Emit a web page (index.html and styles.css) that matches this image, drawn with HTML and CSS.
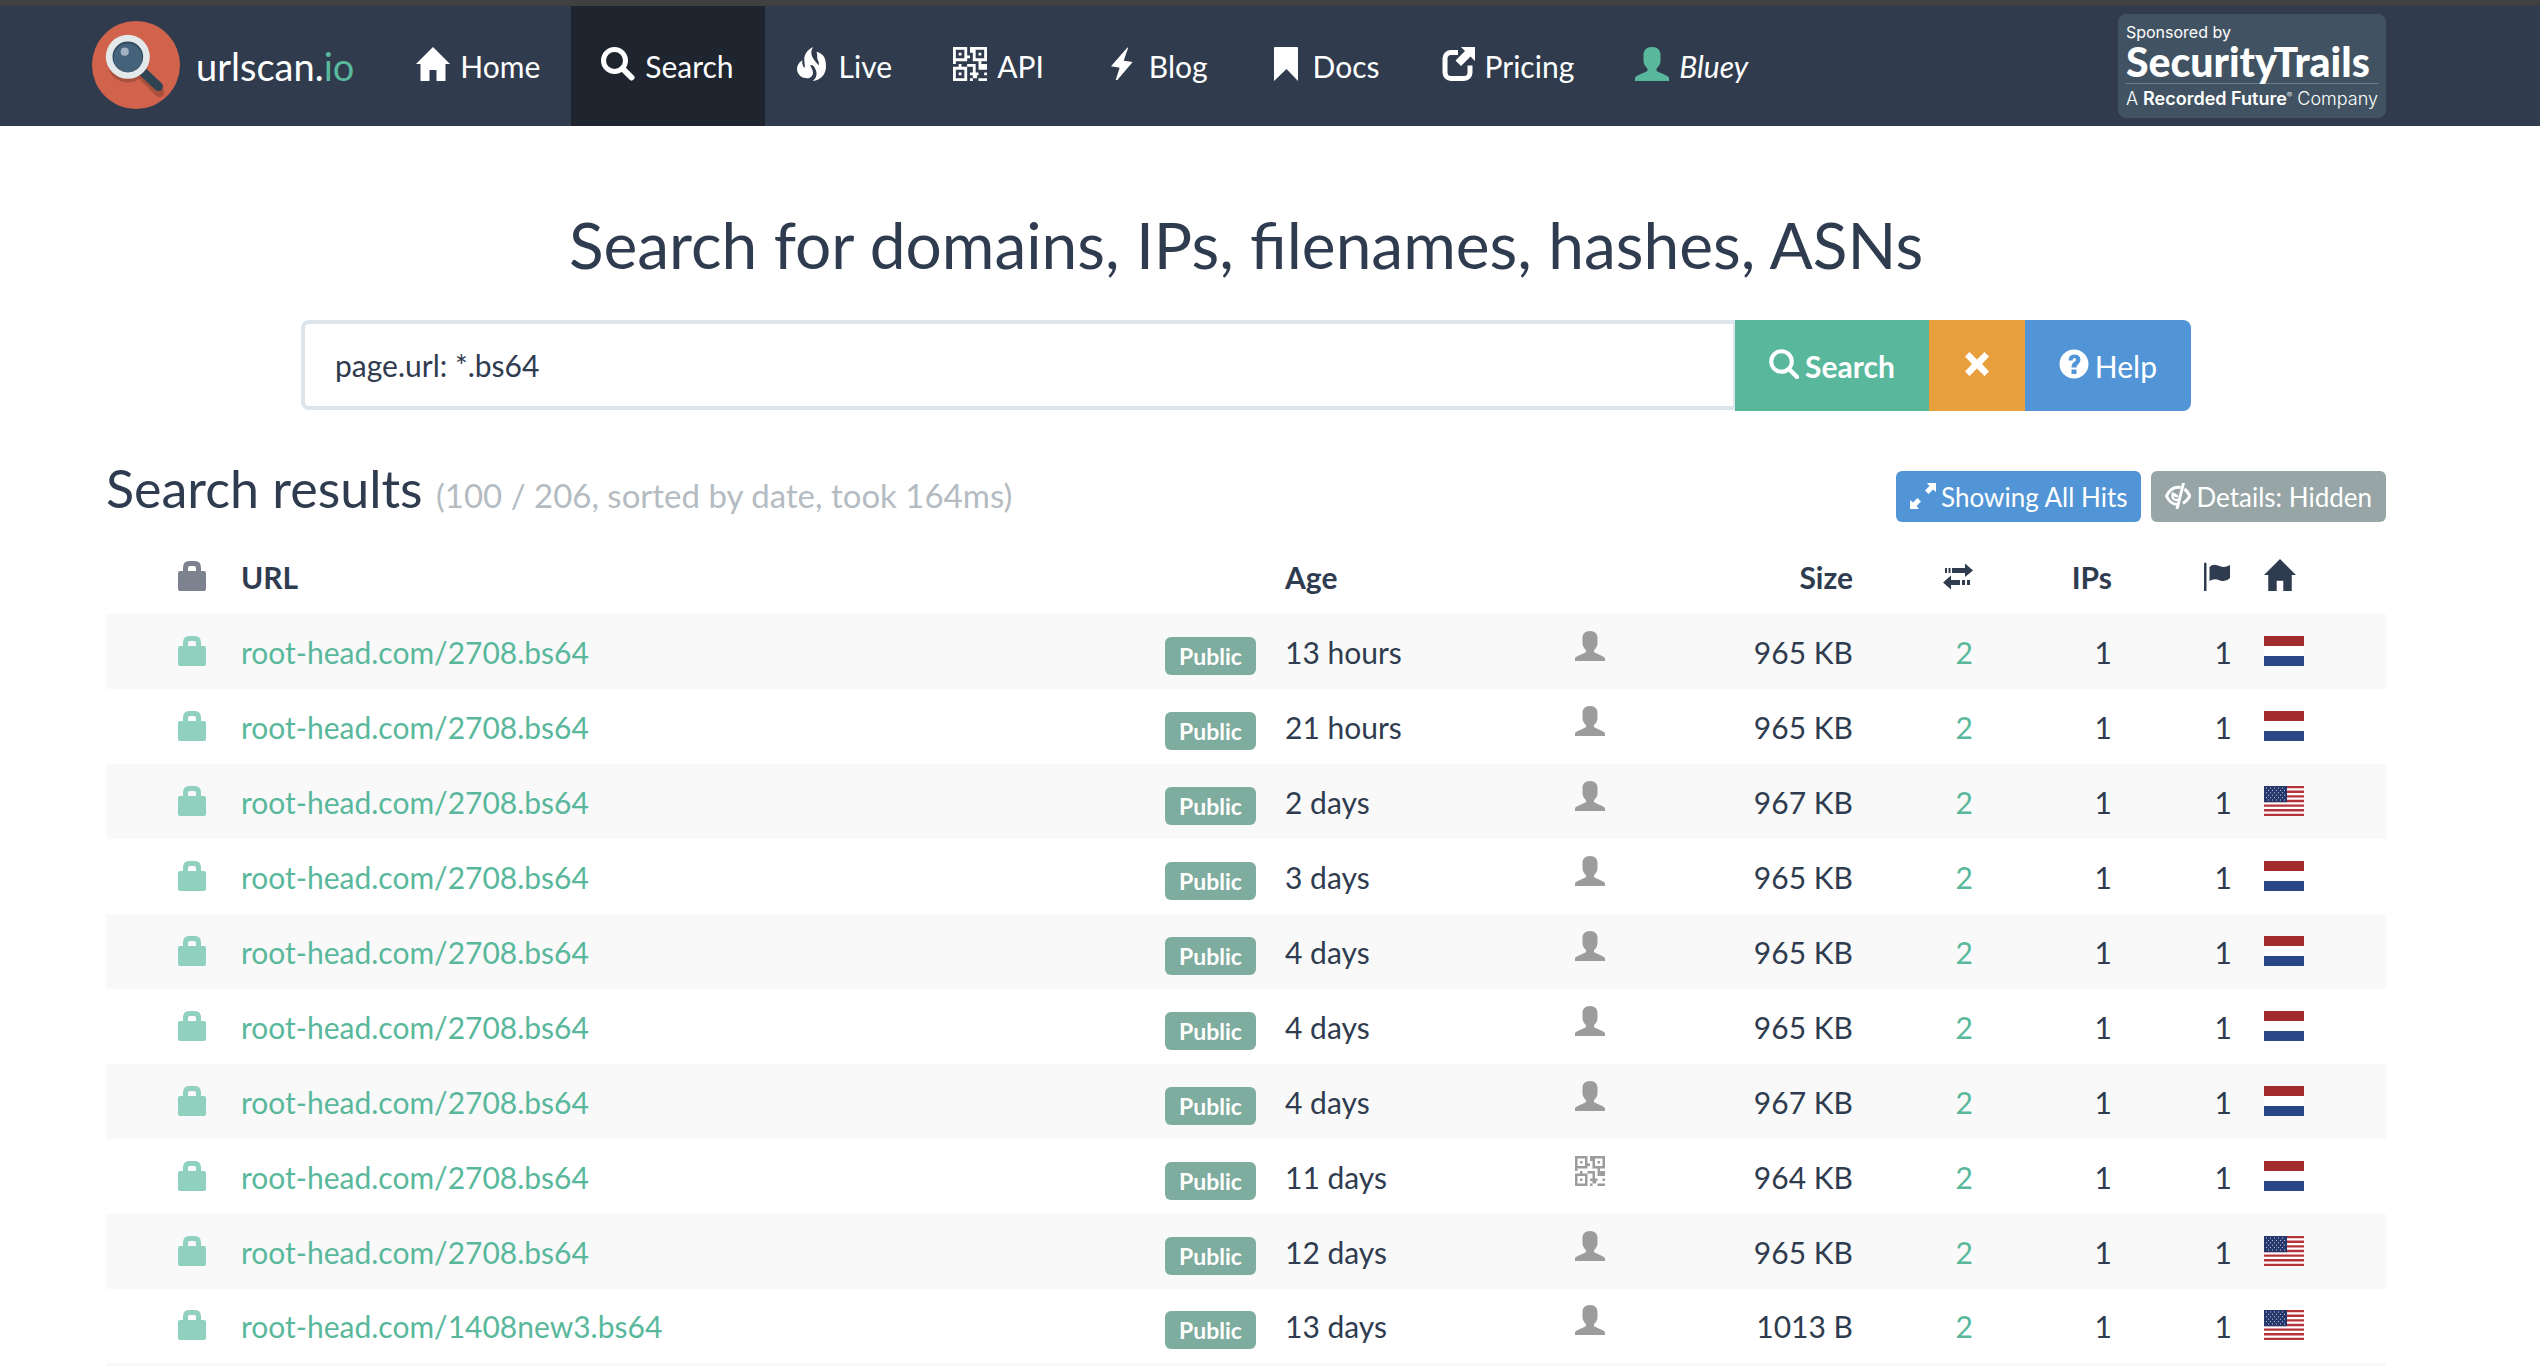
FILE: index.html
```html
<!DOCTYPE html>
<html lang="en">
<head>
<meta charset="utf-8">
<title>Search - urlscan.io</title>
<link rel="stylesheet" href="styles.css">
</head>
<body>
<svg class="sprite" aria-hidden="true">
  <symbol id="home" viewBox="0 0 34 34"><path d="M17 0L34 17H29.500V34H20.500V23H13.500V34H4.500V17H0Z"/></symbol>
  <symbol id="search" viewBox="0 0 34 34"><circle cx="13.500" cy="13.500" r="11" fill="none" stroke="currentColor" stroke-width="5"/><path d="M21.500 21.500L30.500 30.500" stroke="currentColor" stroke-width="6" stroke-linecap="round"/></symbol>
  <symbol id="search-thin" viewBox="0 0 30 30"><circle cx="12.500" cy="12.500" r="10.300" fill="none" stroke="currentColor" stroke-width="4"/><path d="M20 20L28 28" stroke="currentColor" stroke-width="4.500" stroke-linecap="round"/></symbol>
  <symbol id="fire" viewBox="105 138 102 102"><path d="M160 138C143 146 131 160 133 180C134 190 136 195 133 201C128 194 126 187 127 178C115 186 111 195 111 205C112 222 126 232 142 232C152 231 159 224 159 215C159 205 153 202 151 192C159 191 163 197 166 204C173 219 170 230 158 240C183 238 198 220 198 196C198 170 189 156 169 152C173 160 171 165 172 173C176 182 178 188 176 193C167 182 154 170 154 155C154 149 156 143 160 138Z"/></symbol>
  <symbol id="qr" viewBox="0 0 12 12"><path fill-rule="evenodd" d="M0 0H5V5H0ZM1 1V4H4V1ZM7 0H12V5H7ZM8 1V4H11V1ZM0 7H5V12H0ZM1 8V11H4V8ZM2 2H3V3H2ZM9 2H10V3H9ZM2 9H3V10H2ZM5 3H6V4H5ZM6 0H7V2H6ZM0 5H1V6H0ZM2 6H3V7H2ZM9 5H10V6H12V8H9ZM5 6H8V9H9V10H8.500V11H7V10H6V9H7V7H5ZM6 11H7V12H6ZM9 11H12V12H9ZM11 9H12V10H11Z"/></symbol>
  <symbol id="bolt" viewBox="1038 141 102 102"><path d="M1106 142L1056 199L1082 203L1070 240H1075L1121 186L1094 182L1107 145Z"/></symbol>
  <symbol id="bookmark" viewBox="0 0 34 34"><path d="M6 0H28Q29 0 29 1V34L17.500 22L5 34V1Q5 0 6 0Z"/></symbol>
  <symbol id="share" viewBox="0 0 34 34"><path d="M17 5.500H10a6 6 0 0 0-6 6v14a6 6 0 0 0 6 6h13a6 6 0 0 0 6-6v-7" fill="none" stroke="currentColor" stroke-width="5"/><path d="M20 0H34V14L29.500 9.500L20 19L14.500 13.500L24 4Z" stroke="var(--halo)" stroke-width="2" paint-order="stroke"/></symbol>
  <symbol id="user" viewBox="0 0 30 30"><path d="M15 0C10 0 7.500 3 7.500 7V12C7.500 15 9 17.500 11 19V21C10 22.500 0 25 0 27.500V30H30V27.500C30 25 20 22.500 19 21V19C21 17.500 22.500 15 22.500 12V7C22.500 3 20 0 15 0Z"/></symbol>
  <symbol id="lock" viewBox="0 0 30 30"><path fill-rule="evenodd" d="M3 10H6V7Q6 0 12 0H18Q24 0 24 7V10H27Q29 10 29 12V28Q29 30 27 30H3Q1 30 1 28V12Q1 10 3 10ZM11 10H19V7Q19 5 17 5H13Q11 5 11 7Z"/></symbol>
  <symbol id="remove" viewBox="0 0 30 30"><path d="M3 7.500L7.500 3L15 10.500L22.500 3L27 7.500L20 15L27 22.500L22.500 27L15 19.500L7.500 27L3 22.500L10 15Z"/></symbol>
  <symbol id="question" viewBox="0 0 30 30"><path fill-rule="evenodd" d="M15 .500A14.500 14.500 0 1 1 15 29.500A14.500 14.500 0 1 1 15 .500ZM12.500 20.500V25H17.500V20.500ZM9.500 11.500H13.500Q13.500 9 15.500 9Q17 9 17 10.500Q17 12 15 13Q12.500 14.500 12.500 18.500H17.500Q17.500 16.500 19 15.500Q21.500 13.500 21.500 10.500Q21 5.500 15 5.500Q9.500 6 9.500 11.500Z"/></symbol>
  <symbol id="fullscreen" viewBox="0 0 26 26"><path d="M17 0H26V9L23 6.500L18.500 11L15 7.500L19.500 3ZM0 26V17L3 19.500L7.500 15L11 18.500L6.500 23L9 26Z"/></symbol>
  <symbol id="eye" viewBox="0 0 26 26"><path d="M15.500 4.500Q6 3 1.500 13Q5 21 12 21.500M19.500 6Q23 9 25 13Q23 17 18 20.500" fill="none" stroke="currentColor" stroke-width="3"/><path d="M8 9.500Q6 18 13.500 17M9.500 10.500Q10 13.500 13 13" fill="none" stroke="currentColor" stroke-width="2.500"/><path d="M17 0H20L13.500 26H10.500Z"/></symbol>
  <symbol id="transfer" viewBox="0 0 30 30"><path d="M2 7H4V12H2ZM5.500 7H7.500V12H5.500ZM9 7H22V2.500L30 9.500L22 16V12H9ZM8 14.500V19H17V24H8V28.500L0 21.500ZM19 19H22V24H19ZM24 19H27V24H24Z"/></symbol>
  <symbol id="flag" viewBox="0 0 30 30"><path d="M2 2.500Q3.500 .500 4.500 2.500V30H2ZM7.500 6Q11 2.500 16 4.500Q22 7.500 28 4V17Q24 21.500 18 19.500Q12 17 7.500 20Z"/></symbol>
  <symbol id="nl" viewBox="0 0 40 30"><path fill="#fff" d="M0 0H40V30H0Z"/><path fill="#a22b2d" d="M0 0H40V10H0Z"/><path fill="#294687" d="M0 20H40V30H0Z"/></symbol>
  <symbol id="us" viewBox="0 0 40 30"><path fill="#fff" d="M0 0H40V30H0Z"/><path d="M0 1.150H40M0 5.770H40M0 10.380H40M0 15H40M0 19.620H40M0 24.230H40M0 28.850H40" stroke="#b5343c" stroke-width="2.310"/><path fill="#26386b" d="M0 0H23V16.150H0Z"/><path d="M2 2H22M4 4.400H22M2 6.800H22M4 9.200H22M2 11.600H22M4 14H22" stroke="#c9cfdf" stroke-width="1" stroke-dasharray="1 3"/></symbol>
</svg>

<header class="navbar">
  <a class="brand" href="#">
    <svg class="logo" viewBox="0 0 86 86" aria-hidden="true"><circle cx="43" cy="43" r="43" fill="#d1634c"/><circle cx="35" cy="40" r="20" fill="#a84f3e"/><path d="M50 54L66 70" stroke="#a84f3e" stroke-width="9" stroke-linecap="round"/><path d="M48 48L65 64" stroke="#2f4353" stroke-width="9" stroke-linecap="round"/><circle cx="35" cy="35" r="21.500" fill="#e3e8ea"/><circle cx="35" cy="35" r="15" fill="#2f4a5e"/><circle cx="35" cy="36" r="14" fill="#45627b"/><circle cx="32" cy="30" r="4" fill="#a3b2c2"/></svg>
    <span>urlscan.<span class="tld">io</span></span>
  </a>
  <nav class="menu">
    <a href="#"><svg class="icon"><use href="#home"/></svg>Home</a>
    <a href="#" class="active"><svg class="icon"><use href="#search"/></svg>Search</a>
    <a href="#"><svg class="icon"><use href="#fire"/></svg>Live</a>
    <a href="#"><svg class="icon"><use href="#qr"/></svg>API</a>
    <a href="#"><svg class="icon"><use href="#bolt"/></svg>Blog</a>
    <a href="#"><svg class="icon"><use href="#bookmark"/></svg>Docs</a>
    <a href="#"><svg class="icon"><use href="#share"/></svg>Pricing</a>
    <a href="#" class="account"><svg class="icon"><use href="#user"/></svg><em>Bluey</em></a>
  </nav>
  <a class="sponsor" href="#">
    <span class="sponsor-by">Sponsored by</span>
    <span class="sponsor-name">SecurityTrails</span>
    <span class="sponsor-owner">A <b>Recorded Future</b><sup>®</sup> Company</span>
  </a>
</header>

<main class="container">
  <h1>Search for domains, IPs, filenames, hashes, ASNs</h1>
  <form class="search">
    <input type="text" aria-label="Search query" value="page.url: *.bs64">
    <button type="submit" class="go"><svg class="icon"><use href="#search-thin"/></svg>Search</button>
    <button type="reset" class="clear" aria-label="Clear"><svg class="icon"><use href="#remove"/></svg></button>
    <button type="button" class="help"><svg class="icon"><use href="#question"/></svg>Help</button>
  </form>

  <div class="results-head">
    <h2>Search results <small>(100 / 206, sorted by date, took 164ms)</small></h2>
    <div class="toggles">
      <button type="button" class="hits"><svg class="icon"><use href="#fullscreen"/></svg>Showing All Hits</button>
      <button type="button" class="details"><svg class="icon"><use href="#eye"/></svg>Details: Hidden</button>
    </div>
  </div>

  <table class="results">
    <colgroup><col class="c-lock"><col><col class="c-badge"><col class="c-age"><col class="c-via"><col class="c-size"><col class="c-reqs"><col class="c-ips"><col class="c-flag"><col class="c-home"></colgroup>
    <thead>
      <tr><th class="lock"><svg class="icon"><use href="#lock"/></svg></th><th>URL</th><th></th><th>Age</th><th></th><th class="num">Size</th><th class="num"><svg class="icon"><use href="#transfer"/></svg></th><th class="num">IPs</th><th class="num"><svg class="icon"><use href="#flag"/></svg></th><th><svg class="icon wide"><use href="#home"/></svg></th></tr>
    </thead>
    <tbody>
      <tr><td class="lock"><svg class="icon"><use href="#lock"/></svg></td><td><a href="#">root-head.com/2708.bs64</a></td><td class="vis"><span class="badge">Public</span></td><td>13 hours</td><td class="via"><svg class="icon"><use href="#user"/></svg></td><td class="num">965 KB</td><td class="num reqs">2</td><td class="num">1</td><td class="num">1</td><td><svg class="country"><use href="#nl"/></svg></td></tr>
      <tr><td class="lock"><svg class="icon"><use href="#lock"/></svg></td><td><a href="#">root-head.com/2708.bs64</a></td><td class="vis"><span class="badge">Public</span></td><td>21 hours</td><td class="via"><svg class="icon"><use href="#user"/></svg></td><td class="num">965 KB</td><td class="num reqs">2</td><td class="num">1</td><td class="num">1</td><td><svg class="country"><use href="#nl"/></svg></td></tr>
      <tr><td class="lock"><svg class="icon"><use href="#lock"/></svg></td><td><a href="#">root-head.com/2708.bs64</a></td><td class="vis"><span class="badge">Public</span></td><td>2 days</td><td class="via"><svg class="icon"><use href="#user"/></svg></td><td class="num">967 KB</td><td class="num reqs">2</td><td class="num">1</td><td class="num">1</td><td><svg class="country"><use href="#us"/></svg></td></tr>
      <tr><td class="lock"><svg class="icon"><use href="#lock"/></svg></td><td><a href="#">root-head.com/2708.bs64</a></td><td class="vis"><span class="badge">Public</span></td><td>3 days</td><td class="via"><svg class="icon"><use href="#user"/></svg></td><td class="num">965 KB</td><td class="num reqs">2</td><td class="num">1</td><td class="num">1</td><td><svg class="country"><use href="#nl"/></svg></td></tr>
      <tr><td class="lock"><svg class="icon"><use href="#lock"/></svg></td><td><a href="#">root-head.com/2708.bs64</a></td><td class="vis"><span class="badge">Public</span></td><td>4 days</td><td class="via"><svg class="icon"><use href="#user"/></svg></td><td class="num">965 KB</td><td class="num reqs">2</td><td class="num">1</td><td class="num">1</td><td><svg class="country"><use href="#nl"/></svg></td></tr>
      <tr><td class="lock"><svg class="icon"><use href="#lock"/></svg></td><td><a href="#">root-head.com/2708.bs64</a></td><td class="vis"><span class="badge">Public</span></td><td>4 days</td><td class="via"><svg class="icon"><use href="#user"/></svg></td><td class="num">965 KB</td><td class="num reqs">2</td><td class="num">1</td><td class="num">1</td><td><svg class="country"><use href="#nl"/></svg></td></tr>
      <tr><td class="lock"><svg class="icon"><use href="#lock"/></svg></td><td><a href="#">root-head.com/2708.bs64</a></td><td class="vis"><span class="badge">Public</span></td><td>4 days</td><td class="via"><svg class="icon"><use href="#user"/></svg></td><td class="num">967 KB</td><td class="num reqs">2</td><td class="num">1</td><td class="num">1</td><td><svg class="country"><use href="#nl"/></svg></td></tr>
      <tr><td class="lock"><svg class="icon"><use href="#lock"/></svg></td><td><a href="#">root-head.com/2708.bs64</a></td><td class="vis"><span class="badge">Public</span></td><td>11 days</td><td class="via"><svg class="icon"><use href="#qr"/></svg></td><td class="num">964 KB</td><td class="num reqs">2</td><td class="num">1</td><td class="num">1</td><td><svg class="country"><use href="#nl"/></svg></td></tr>
      <tr><td class="lock"><svg class="icon"><use href="#lock"/></svg></td><td><a href="#">root-head.com/2708.bs64</a></td><td class="vis"><span class="badge">Public</span></td><td>12 days</td><td class="via"><svg class="icon"><use href="#user"/></svg></td><td class="num">965 KB</td><td class="num reqs">2</td><td class="num">1</td><td class="num">1</td><td><svg class="country"><use href="#us"/></svg></td></tr>
      <tr><td class="lock"><svg class="icon"><use href="#lock"/></svg></td><td><a href="#">root-head.com/1408new3.bs64</a></td><td class="vis"><span class="badge">Public</span></td><td>13 days</td><td class="via"><svg class="icon"><use href="#user"/></svg></td><td class="num">1013 B</td><td class="num reqs">2</td><td class="num">1</td><td class="num">1</td><td><svg class="country"><use href="#us"/></svg></td></tr>
    </tbody>
  </table>
</main>
</body>
</html>
```
FILE: styles.css
```css
:root {
  --ink: #2f3c4f;
  --green: #59b89c;
  --blue: #5295d6;
  --nav: #303c4e;
}

* { box-sizing: border-box; }

body {
  margin: 0;
  background: #fff;
  color: var(--ink);
  font: 30px/42px Lato, "Liberation Sans", sans-serif;
}

a { color: var(--green); text-decoration: none; }

.sprite { display: none; }

.icon {
  width: 30px;
  height: 30px;
  flex: none;
  fill: currentColor;
}

/* Top bar */
.navbar {
  display: flex;
  align-items: center;
  height: 126px;
  padding: 0 154px 0 92px;
  border-top: 6px solid #404040;
  background: var(--nav);
}

.brand {
  display: flex;
  align-items: center;
  gap: 16px;
  margin-right: 32px;
  color: #fff;
  font-size: 38px;
}

.brand .tld { color: var(--green); }

.logo { width: 88px; height: 88px; margin-bottom: 2px; }

.menu { display: flex; align-self: stretch; }

.menu a {
  --halo: var(--nav);
  display: flex;
  align-items: center;
  gap: 10px;
  padding: 0 31px 0 30px;
  color: #fff;
}

.menu .active { background: #1e252e; }

.menu .icon {
  width: 34px;
  height: 34px;
  margin-bottom: 5px;
}

.account .icon { color: var(--green); }

.sponsor {
  display: flex;
  flex-direction: column;
  margin-left: auto;
  padding: 9px 8px 5px;
  border-radius: 8px;
  background: #415362;
  color: #fff;
  font-family: Inter, sans-serif;
  white-space: nowrap;
}

.sponsor-by { font-size: 16px; line-height: 18px; }

.sponsor-name {
  border-bottom: 1px solid #6b7c8b;
  font: 900 41px/42px Lato, sans-serif;
}

.sponsor-owner { font-size: 18px; line-height: 29px; font-weight: 300; }
.sponsor-owner b { font-weight: 600; }
.sponsor-owner sup { font-size: 8px; line-height: 8px; vertical-align: 7px; }

/* Search form */
.container { padding: 0 154px 0 106px; }

h1, h2 { margin: 0; font-weight: 400; }

h1 {
  padding-top: 82px;
  font-size: 64px;
  line-height: 74px;
  text-align: center;
}

.search {
  display: flex;
  max-width: 1890px;
  margin: 38px auto 48px;
}

.search input {
  flex: 1;
  min-width: 0;
  height: 90px;
  padding: 0 30px;
  border: 4px solid #dce4ec;
  border-right-width: 2px;
  border-radius: 8px 0 0 8px;
  color: inherit;
  font: inherit;
}

button {
  display: flex;
  align-items: center;
  border: 0;
  color: #fff;
  font: inherit;
}

.search button {
  gap: 6px;
  height: 91px;
  padding: 0 34px;
}

.search .icon { margin-bottom: 4px; }

.search .go { background: var(--green); font-weight: 700; }
.search .clear { padding: 0 33px; background: #e8a03c; }
.search .help { border-radius: 0 8px 8px 0; background: var(--blue); }

/* Results heading */
.results-head {
  display: flex;
  justify-content: space-between;
  align-items: flex-end;
}

h2 { padding-bottom: 5px; font-size: 52px; line-height: 58px; }
h2 small { color: #b4bcc2; font-size: 33px; line-height: 1; }

.toggles { display: flex; gap: 10px; }

.toggles button {
  gap: 5px;
  height: 51px;
  padding: 0 14px;
  border-radius: 6px;
  font-size: 26px;
}

.toggles .icon { width: 26px; height: 26px; margin-bottom: 2px; }

.hits { background: var(--blue); }
.details { background: #97a5a6; }

/* Results table */
.results {
  width: 100%;
  margin-top: 17px;
  border-collapse: collapse;
  border-bottom: 3px solid #f9f9f9;
  table-layout: fixed;
}

.c-lock { width: 119px; }
.c-badge { width: 120px; }
.c-age { width: 290px; }
.c-via { width: 130px; }
.c-size { width: 180px; }
.c-reqs { width: 120px; }
.c-ips { width: 139px; }
.c-flag { width: 120px; }
.c-home { width: 138px; }

th, td {
  height: 75px;
  padding: 0 16px;
  font-weight: 400;
  text-align: left;
  white-space: nowrap;
}

th { font-weight: 700; }

tbody tr:nth-child(odd) { background: #f9f9f9; }

.results .num, .results .lock, .results .vis { text-align: right; }
.results .lock, .results .vis { padding-right: 18px; }
.results .reqs { color: var(--green); }

.results svg { display: inline-block; vertical-align: middle; margin-bottom: 8px; }
.results .wide { width: 32px; height: 32px; }

.results .lock { color: #7c838f; }
.results td.lock { color: #90d0bf; }
.results .via { color: #9c9c9c; }
.results .via svg { margin-bottom: 14px; }

.country { width: 40px; height: 30px; }

.badge {
  display: inline-block;
  margin-top: 4px;
  padding: 0 14px;
  border-radius: 6px;
  background: #7eac9e;
  color: #fff;
  font-size: 23px;
  font-weight: 700;
  line-height: 38px;
  vertical-align: middle;
}
```
